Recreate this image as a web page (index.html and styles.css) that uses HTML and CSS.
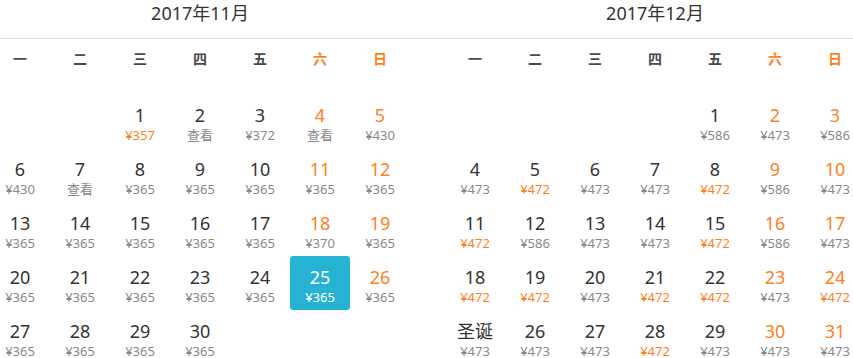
FILE: index.html
```html
<!DOCTYPE html>
<html lang="zh-CN">
<head>
<meta charset="utf-8">
<title>日历</title>
<link rel="stylesheet" href="styles.css">
</head>
<body>
<div class="page">
  <div class="titles">
    <div class="title">2017年11月</div>
    <div class="title">2017年12月</div>
  </div>
  <div class="months">
    <div class="month">
      <div class="wd">一</div><div class="wd">二</div><div class="wd">三</div><div class="wd">四</div><div class="wd">五</div><div class="wd we">六</div><div class="wd we">日</div>

      <div class="cell"></div><div class="cell"></div>
      <div class="cell"><span class="d">1</span><span class="p low">¥357</span></div>
      <div class="cell"><span class="d">2</span><span class="p">查看</span></div>
      <div class="cell"><span class="d">3</span><span class="p">¥372</span></div>
      <div class="cell we"><span class="d">4</span><span class="p">查看</span></div>
      <div class="cell we"><span class="d">5</span><span class="p">¥430</span></div>

      <div class="cell"><span class="d">6</span><span class="p">¥430</span></div>
      <div class="cell"><span class="d">7</span><span class="p">查看</span></div>
      <div class="cell"><span class="d">8</span><span class="p">¥365</span></div>
      <div class="cell"><span class="d">9</span><span class="p">¥365</span></div>
      <div class="cell"><span class="d">10</span><span class="p">¥365</span></div>
      <div class="cell we"><span class="d">11</span><span class="p">¥365</span></div>
      <div class="cell we"><span class="d">12</span><span class="p">¥365</span></div>

      <div class="cell"><span class="d">13</span><span class="p">¥365</span></div>
      <div class="cell"><span class="d">14</span><span class="p">¥365</span></div>
      <div class="cell"><span class="d">15</span><span class="p">¥365</span></div>
      <div class="cell"><span class="d">16</span><span class="p">¥365</span></div>
      <div class="cell"><span class="d">17</span><span class="p">¥365</span></div>
      <div class="cell we"><span class="d">18</span><span class="p">¥370</span></div>
      <div class="cell we"><span class="d">19</span><span class="p">¥365</span></div>

      <div class="cell"><span class="d">20</span><span class="p">¥365</span></div>
      <div class="cell"><span class="d">21</span><span class="p">¥365</span></div>
      <div class="cell"><span class="d">22</span><span class="p">¥365</span></div>
      <div class="cell"><span class="d">23</span><span class="p">¥365</span></div>
      <div class="cell"><span class="d">24</span><span class="p">¥365</span></div>
      <div class="cell we selected"><span class="d">25</span><span class="p">¥365</span></div>
      <div class="cell we"><span class="d">26</span><span class="p">¥365</span></div>

      <div class="cell"><span class="d">27</span><span class="p">¥365</span></div>
      <div class="cell"><span class="d">28</span><span class="p">¥365</span></div>
      <div class="cell"><span class="d">29</span><span class="p">¥365</span></div>
      <div class="cell"><span class="d">30</span><span class="p">¥365</span></div>
    </div>

    <div class="month">
      <div class="wd">一</div><div class="wd">二</div><div class="wd">三</div><div class="wd">四</div><div class="wd">五</div><div class="wd we">六</div><div class="wd we">日</div>

      <div class="cell"></div><div class="cell"></div><div class="cell"></div><div class="cell"></div>
      <div class="cell"><span class="d">1</span><span class="p">¥586</span></div>
      <div class="cell we"><span class="d">2</span><span class="p">¥473</span></div>
      <div class="cell we"><span class="d">3</span><span class="p">¥586</span></div>

      <div class="cell"><span class="d">4</span><span class="p">¥473</span></div>
      <div class="cell"><span class="d">5</span><span class="p low">¥472</span></div>
      <div class="cell"><span class="d">6</span><span class="p">¥473</span></div>
      <div class="cell"><span class="d">7</span><span class="p">¥473</span></div>
      <div class="cell"><span class="d">8</span><span class="p low">¥472</span></div>
      <div class="cell we"><span class="d">9</span><span class="p">¥586</span></div>
      <div class="cell we"><span class="d">10</span><span class="p">¥473</span></div>

      <div class="cell"><span class="d">11</span><span class="p low">¥472</span></div>
      <div class="cell"><span class="d">12</span><span class="p">¥586</span></div>
      <div class="cell"><span class="d">13</span><span class="p">¥473</span></div>
      <div class="cell"><span class="d">14</span><span class="p">¥473</span></div>
      <div class="cell"><span class="d">15</span><span class="p low">¥472</span></div>
      <div class="cell we"><span class="d">16</span><span class="p">¥586</span></div>
      <div class="cell we"><span class="d">17</span><span class="p">¥473</span></div>

      <div class="cell"><span class="d">18</span><span class="p low">¥472</span></div>
      <div class="cell"><span class="d">19</span><span class="p low">¥472</span></div>
      <div class="cell"><span class="d">20</span><span class="p">¥473</span></div>
      <div class="cell"><span class="d">21</span><span class="p low">¥472</span></div>
      <div class="cell"><span class="d">22</span><span class="p low">¥472</span></div>
      <div class="cell we"><span class="d">23</span><span class="p">¥473</span></div>
      <div class="cell we"><span class="d">24</span><span class="p low">¥472</span></div>

      <div class="cell"><span class="d">圣诞</span><span class="p">¥473</span></div>
      <div class="cell"><span class="d">26</span><span class="p">¥473</span></div>
      <div class="cell"><span class="d">27</span><span class="p">¥473</span></div>
      <div class="cell"><span class="d">28</span><span class="p low">¥472</span></div>
      <div class="cell"><span class="d">29</span><span class="p">¥473</span></div>
      <div class="cell we"><span class="d">30</span><span class="p">¥473</span></div>
      <div class="cell we"><span class="d">31</span><span class="p">¥473</span></div>
    </div>
  </div>
</div>
</body>
</html>
```

FILE: styles.css
```css
html, body {
  margin: 0;
  padding: 0;
  background: #fff;
}
body {
  font-family: "Noto Sans", "Noto Sans CJK SC", sans-serif;
  color: #333;
  width: 853px;
  height: 358px;
  overflow: hidden;
}
.page {
  width: 853px;
  overflow: hidden;
}
.titles {
  display: flex;
  gap: 35px;
  margin-left: -10px;
  width: 875px;
  border-bottom: 1px solid #e3e3e3;
}
.title {
  width: 420px;
  height: 38px;
  line-height: 27px;
  font-size: 18px;
  text-align: center;
  color: #333;
}
.months {
  display: flex;
  gap: 35px;
  margin-left: -10px;
  width: 875px;
}
.month {
  width: 420px;
  display: grid;
  grid-template-columns: repeat(7, 60px);
  grid-auto-rows: 54px;
  grid-template-rows: 55px;
}
.wd {
  text-align: center;
  font-size: 14px;
  font-weight: 700;
  line-height: 16px;
  padding-top: 12px;
  color: #4a4a4a;
}
.wd.we {
  color: #ff7f1f;
}
.cell {
  display: flex;
  flex-direction: column;
  align-items: center;
  padding-top: 10px;
  box-sizing: border-box;
  border-radius: 3px;
}
.d {
  font-size: 18px;
  line-height: 22px;
  color: #333;
}
.cell.we .d {
  color: #ff7f1f;
}
.p {
  font-size: 13px;
  line-height: 18px;
  color: #888;
}
.p.low {
  color: #ff7f1f;
}
.cell.selected {
  background: #26b3d3;
}
.cell.selected .d,
.cell.selected .p {
  color: #fff;
}
```
